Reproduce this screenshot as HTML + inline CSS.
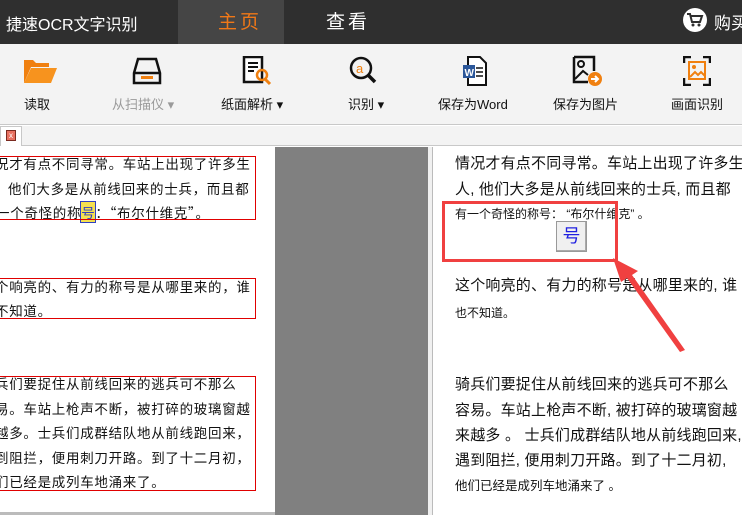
<!DOCTYPE html>
<html><head><meta charset="utf-8"><style>
*{margin:0;padding:0;box-sizing:border-box}
body{width:742px;height:515px;overflow:hidden;position:relative;background:#fff;font-family:"Liberation Sans","Noto Sans CJK SC",sans-serif}
.a{position:absolute;white-space:nowrap}
#top{left:0;top:0;width:742px;height:44px;background:#2f2f2f}
#tb{left:0;top:44px;width:742px;height:81px;background:#f3f3f3;border-bottom:1px solid #c8c8c8}
.lbl{font-size:13px;color:#111;top:94px}
.lt{font-family:"Noto Sans CJK SC",sans-serif;font-size:13.5px;color:#111;letter-spacing:.7px}
.rt{font-size:15px;color:#111;letter-spacing:.2px}
.box{position:absolute;border:1px solid #e00000}
</style></head><body>
<div class="a" id="top"></div>
<div class="a" style="left:6px;top:11px;color:#fff;font-size:16px">捷速OCR文字识别</div>
<div class="a" style="left:178px;top:0;width:106px;height:44px;background:#454545"></div>
<div class="a" style="left:218px;top:7px;color:#f07818;font-size:19px;letter-spacing:3px">主页</div>
<div class="a" style="left:326px;top:7px;color:#fff;font-size:19px;letter-spacing:3px">查看</div>
<div class="a" style="left:683px;top:8px;width:24px;height:24px;border-radius:50%;background:#fff"></div>
<svg class="a" style="left:686px;top:12px" width="18" height="16" viewBox="0 0 18 16"><path d="M1 2h3l2 8h8l2-6H5" fill="none" stroke="#2f2f2f" stroke-width="2"/><circle cx="7" cy="13" r="1.5" fill="#2f2f2f"/><circle cx="13" cy="13" r="1.5" fill="#2f2f2f"/></svg>
<div class="a" style="left:714px;top:9px;color:#fff;font-size:17px">购买</div>
<div class="a" id="tb"></div>
<svg class="a" style="left:23px;top:58px" width="34" height="26"><path d="M1 2h9l3 3h13v4H8L1 25z" fill="#f08010"/><path d="M8 10h26l-6 15H1z" fill="#f7931e"/></svg>
<svg class="a" style="left:132px;top:57px" width="30" height="28"><path d="M6 2h18l4 14v10H2V16z" fill="none" stroke="#111" stroke-width="2.5"/><path d="M2 16h26" stroke="#111" stroke-width="2.5"/><rect x="9" y="19" width="12" height="3" fill="#f08010"/></svg>
<svg class="a" style="left:242px;top:56px" width="32" height="30"><rect x="2" y="1" width="18" height="25" fill="#fff" stroke="#111" stroke-width="2.5"/><path d="M6 7h10M6 11h10M6 15h6" stroke="#111" stroke-width="2"/><circle cx="20" cy="19" r="5" fill="none" stroke="#f08010" stroke-width="2.5"/><path d="M23 23l5 5" stroke="#f08010" stroke-width="3"/></svg>
<svg class="a" style="left:348px;top:55px" width="32" height="30"><circle cx="13" cy="13" r="10" fill="none" stroke="#111" stroke-width="2.5"/><text x="8" y="18" font-size="13" fill="#f08010" font-family="Liberation Sans">a</text><path d="M20 20l7 7" stroke="#111" stroke-width="3.5"/></svg>
<svg class="a" style="left:460px;top:56px" width="30" height="30"><path d="M8 1h12l6 6v22H8z" fill="#fff" stroke="#111" stroke-width="2"/><path d="M16 12h7M16 16h7M16 20h7" stroke="#111" stroke-width="1.5"/><rect x="3" y="9" width="12" height="13" fill="#2b579a"/><text x="4.5" y="20" font-size="10" fill="#fff" font-family="Liberation Sans" font-weight="bold">W</text></svg>
<svg class="a" style="left:572px;top:55px" width="34" height="32"><path d="M2 2h20v14M2 2v25h14" fill="none" stroke="#111" stroke-width="2.5"/><circle cx="9" cy="9" r="3" fill="none" stroke="#111" stroke-width="2"/><path d="M3 24l8-8 5 4" fill="none" stroke="#111" stroke-width="2"/><circle cx="23" cy="24" r="7" fill="#f08010"/><path d="M19 24h7M23 21l3 3-3 3" stroke="#fff" stroke-width="2" fill="none"/></svg>
<svg class="a" style="left:683px;top:56px" width="28" height="30"><path d="M1 7V1h7M20 1h7v6M27 22v7h-7M8 29H1v-7" fill="none" stroke="#111" stroke-width="2.5"/><rect x="6" y="6" width="16" height="17" fill="none" stroke="#f08010" stroke-width="2"/><circle cx="11" cy="11" r="2" fill="#f08010"/><path d="M7 21l5-5 3 3 3-3 4 4" fill="none" stroke="#f08010" stroke-width="2"/></svg>
<div class="a lbl" style="left:24px">读取</div>
<div class="a lbl" style="left:112px;color:#9a9a9a">从扫描仪 ▾</div>
<div class="a lbl" style="left:221px">纸面解析 ▾</div>
<div class="a lbl" style="left:348px">识别 ▾</div>
<div class="a lbl" style="left:438px">保存为Word</div>
<div class="a lbl" style="left:553px">保存为图片</div>
<div class="a lbl" style="left:671px">画面识别</div>
<div class="a" style="left:0;top:126px;width:742px;height:20px;background:#f3f3f3;border-bottom:1px solid #c8c8c8"></div>
<div class="a" style="left:0;top:126px;width:22px;height:20px;background:#fff;border:1px solid #c8c8c8;border-bottom:none"></div>
<div class="a" style="left:6px;top:130px;width:10px;height:11px;background:#e87060;border:1px solid #7a2a20;color:#fff;font-size:8px;line-height:9px;text-align:center">x</div>
<div class="a" style="left:275px;top:147px;width:153px;height:368px;background:#808080"></div>
<div class="a" style="left:428px;top:147px;width:4px;height:368px;background:#f0f0f0"></div>
<div class="a" style="left:432px;top:147px;width:310px;height:368px;border-left:1px solid #bbb;background:#fff"></div>
<div class="a" style="left:0;top:512px;width:275px;height:3px;background:#bbb"></div>
<div class="a lt" style="left:-5px;top:153px">况才有点不同寻常。车站上出现了许多生</div>
<div class="a lt" style="left:8px;top:178px">他们大多是从前线回来的士兵，而且都</div>
<div class="a lt" style="left:-4px;top:202px">一个奇怪的称<span style="background:#f5e050;outline:1px solid #3040c0;color:#3040c0">号</span>：“布尔什维克”。</div>
<div class="a lt" style="left:-5px;top:276px">个响亮的、有力的称号是从哪里来的，谁</div>
<div class="a lt" style="left:-5px;top:300px">不知道。</div>
<div class="a lt" style="left:-5px;top:373px">兵们要捉住从前线回来的逃兵可不那么</div>
<div class="a lt" style="left:-5px;top:398px">易。车站上枪声不断，被打碎的玻璃窗越</div>
<div class="a lt" style="left:-5px;top:422px">越多。士兵们成群结队地从前线跑回来，</div>
<div class="a lt" style="left:-5px;top:447px">到阻拦，便用刺刀开路。到了十二月初，</div>
<div class="a lt" style="left:-5px;top:471px">们已经是成列车地涌来了。</div>
<div class="box" style="left:-2px;top:156px;width:258px;height:64px"></div>
<div class="box" style="left:-2px;top:278px;width:258px;height:41px"></div>
<div class="box" style="left:-2px;top:376px;width:258px;height:115px"></div>
<div class="a rt" style="left:455px;top:152px">情况才有点不同寻常。车站上出现了许多生</div>
<div class="a rt" style="left:455px;top:178px">人, 他们大多是从前线回来的士兵, 而且都</div>
<div class="a" style="left:455px;top:205px;font-size:12px;color:#111">有一个奇怪的称号：&nbsp;“布尔什维克”&nbsp;。</div>
<div class="a" style="left:556px;top:221px;width:31px;height:31px;background:#f0f0f0;border:1px solid #999;box-shadow:inset -1px -1px #aaa;color:#2020e0;font-size:18px;text-align:center;line-height:28px">号</div>
<div class="a rt" style="left:455px;top:274px">这个响亮的、有力的称号是从哪里来的, 谁</div>
<div class="a" style="left:455px;top:304px;font-size:12px;color:#111">也不知道。</div>
<div class="a rt" style="left:455px;top:373px">骑兵们要捉住从前线回来的逃兵可不那么</div>
<div class="a rt" style="left:455px;top:399px">容易。车站上枪声不断, 被打碎的玻璃窗越</div>
<div class="a rt" style="left:455px;top:424px">来越多 。 士兵们成群结队地从前线跑回来,</div>
<div class="a rt" style="left:455px;top:449px">遇到阻拦, 便用刺刀开路。到了十二月初,</div>
<div class="a" style="left:455px;top:475px;font-size:12.5px;color:#111">他们已经是成列车地涌来了 。</div>
<div class="a" style="left:442px;top:201px;width:176px;height:61px;border:3px solid #f04040"></div>
<svg class="a" style="left:610px;top:255px" width="80" height="100"><path d="M3 3L28 16 22 20 75 95 70 97 17 23 11 27z" fill="#f04040"/></svg>
</body></html>
